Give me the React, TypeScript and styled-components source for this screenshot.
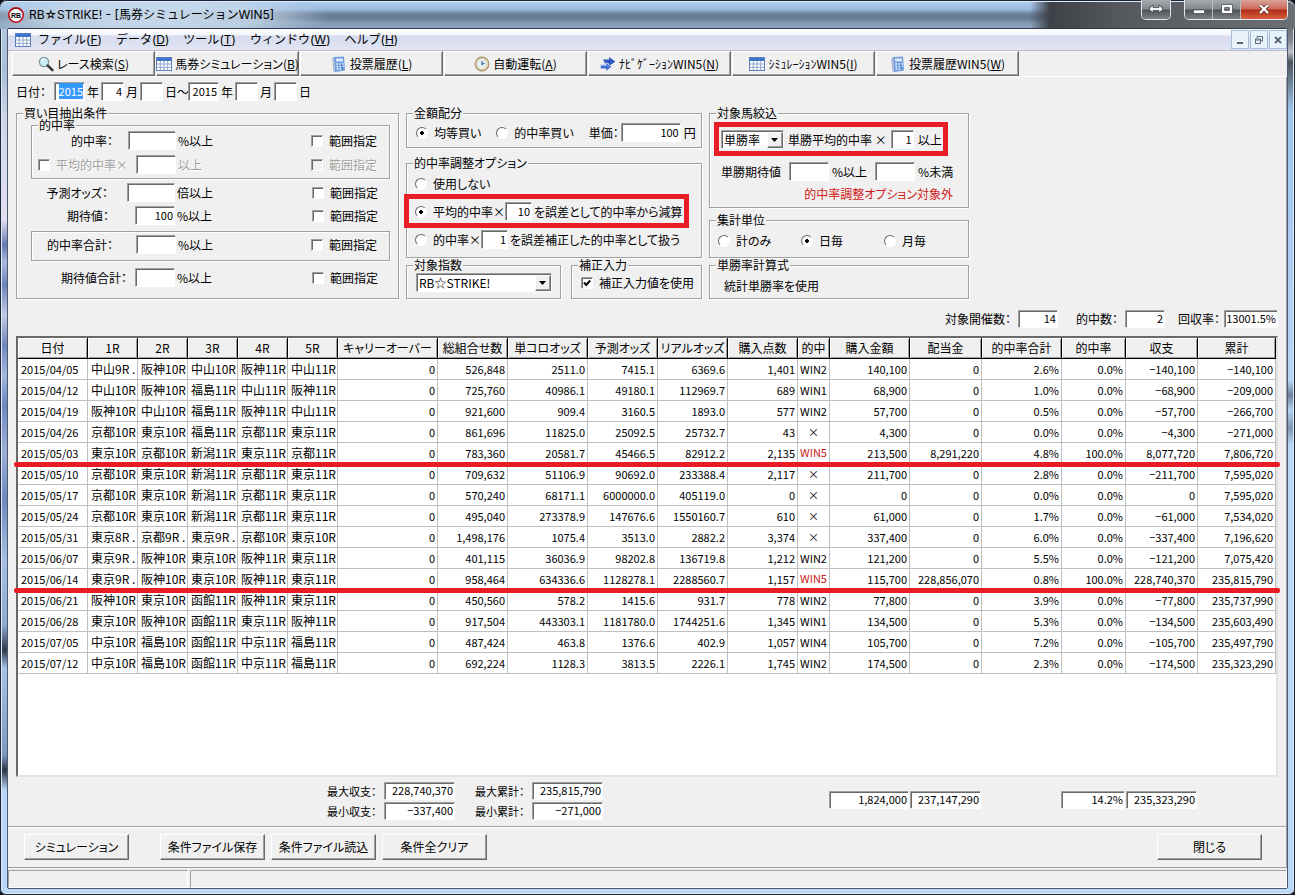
import React from "react";
import styled, { createGlobalStyle, css } from "styled-components";

const face = "#f0f0f0";
const shade = "#a0a0a0";
const dark = "#696969";
const red = "#e81c24";
const gothic = '"Noto Sans CJK JP", "Liberation Sans", sans-serif';
const shell = 'Inter, "Noto Sans CJK JP", sans-serif';

const GlobalStyle = createGlobalStyle`
  * { box-sizing: border-box; }
  body { margin: 0; background: #101018; }
  body, button, input, select {
    font-family: ${gothic};
    font-size: 12px;
    line-height: 16px;
    color: #000;
    font-feature-settings: "palt";
  }
`;

const sunken = css`
  border: 1px solid;
  border-color: ${shade} #fff #fff ${shade};
  box-shadow: inset 1px 1px 0 ${dark};
`;

const raised = css`
  background: ${face};
  border: 1px solid;
  border-color: #fff ${dark} ${dark} #fff;
  box-shadow: inset -1px -1px 0 ${shade};
`;

/* ---------- window frame ---------- */

const Frame = styled.div`
  min-height: 100vh;
  display: flex;
  flex-direction: column;
  padding: 0 8px 7px;
  border-radius: 7px 7px 6px 6px;
  box-shadow: inset 0 0 0 1px #1c2433, inset 0 0 0 2px #dcebfa;
  background:
    linear-gradient(180deg, #b9cde2 0, #a9bfd8 70px, #cfd6ea 120px, #e2dff0 220px, #6579b4 245px, #a9b8df 262px,
      #6d82bd 285px, #c3cbe6 315px, #7286bf 345px, #a3b8de 375px, #6f86bf 405px, #9db0d8 450px, #7088bd 500px,
      #a8bfe2 560px, #8fa9cf 625px, #30384a 650px, #a6c2e6 668px, #7d98c0 755px, #2c3444 770px, #b9d8f8 790px, #b9d8f8) left / 8px 100% no-repeat,
    linear-gradient(180deg, #4a4d52 0, #83878d 40px, #bdc3c9 52px, #4d535a 62px, #9fc4ec 110px, #b6d5f5 380px, #6f8098 395px,
      #b2d2f3 410px, #8093ad 428px, #b9d8f8 445px, #b9d8f8) right / 8px 100% no-repeat,
    #bcd9f8;
`;

const TitleBar = styled.header`
  height: 29px;
  margin: 0 -8px;
  padding: 0 7px 0 8px;
  display: flex;
  align-items: flex-start;
  border-radius: 7px 7px 0 0;
  box-shadow: inset 0 1px 0 #1c2433, inset 0 2px 0 #dcebfa;
  background:
    radial-gradient(ellipse 180px 26px at 150px 17px, rgba(205, 222, 240, 0.95) 0, rgba(200, 218, 236, 0.8) 60%, rgba(200, 218, 236, 0) 100%),
    linear-gradient(90deg, rgba(60, 62, 68, 0) 1030px, #3e4248 1050px, #55585d 1120px, #6c6f74 100%),
    linear-gradient(180deg, #b3cfee 0, #9dbce0 9px, #6a8099 14px, #64788f 18px, #839bb5 23px, #8aa5c4 29px);
`;

const AppIcon = styled.svg`
  width: 16px;
  height: 16px;
  margin-top: 7px;
`;

const Title = styled.h1`
  flex: 1;
  margin: 7px 0 0 5px;
  font-family: ${shell};
  font-size: 12px;
  line-height: 16px;
  font-weight: 400;
  font-feature-settings: normal;
`;

const WindowButtons = styled.div<{ $gap?: number }>`
  display: flex;
  height: 20px;
  margin-left: ${(p) => p.$gap ?? 0}px;
  border: 1px solid #e4e8ee;
  border-top: 0;
  border-radius: 0 0 5px 5px;
  overflow: hidden;
`;

const WindowButton = styled.button<{ $close?: boolean }>`
  width: ${(p) => (p.$close ? 46 : 28)}px;
  padding: 0 0 2px;
  display: flex;
  align-items: center;
  justify-content: center;
  border: 0;
  border-right: ${(p) => (p.$close ? 0 : 1)}px solid #b9bdc3;
  background: ${(p) =>
    p.$close
      ? "linear-gradient(180deg, #dca299 0, #c96a5a 9px, #b02a14 10px, #d8603f 19px)"
      : "linear-gradient(180deg, #a6aaaf 0, #83878d 9px, #4f5358 10px, #7d8187 19px)"};
  &:last-child { border-right: 0; }
`;

const Client = styled.main`
  flex: 1;
  display: flex;
  flex-direction: column;
  background: ${face};
  box-shadow: -1px 0 0 #4c5a70, 1px 0 0 #4c5a70, 0 1px 0 #4c5a70, 0 -1px 0 #2f3b4c;
`;

const MenuBar = styled.nav`
  height: 22px;
  display: flex;
  align-items: center;
  padding: 0 0 0 7px;
  background: linear-gradient(180deg, #fff 0, #f4f6fb 6px, #d6dcee 7px, #e0e4f4 20px);
  border-bottom: 1px solid #b8bccc;
`;

const MenuItem = styled.button`
  margin: 0 0 0 3px;
  padding: 0 4px;
  border: 0;
  background: none;
  font-family: ${shell};
  font-feature-settings: normal;
  & + & { margin-left: 6px; }
`;

const MdiButtons = styled.div`
  margin-left: auto;
  display: flex;
  gap: 1px;
`;

const MdiButton = styled.button`
  width: 18px;
  height: 19px;
  padding: 0;
  display: flex;
  align-items: center;
  justify-content: center;
  border: 1px solid #a9bdd6;
  background: #e8f2fb;
`;

const ToolBar = styled.div`
  display: flex;
  gap: 1px;
  padding-left: 4px;
  height: 26px;
  border-bottom: 1px solid #fff;
`;

const ToolButton = styled.button`
  ${raised}
  flex: 0 0 143px;
  min-width: 0;
  display: flex;
  align-items: center;
  justify-content: center;
  gap: 3px;
  padding: 0;
  white-space: nowrap;
  svg { flex: none; }
`;

/* ---------- form ---------- */

const Form = styled.form`
  flex: 1;
  display: flex;
  flex-direction: column;
  padding: 0 8px;
  border-right: 1px solid ${shade};
`;

const DateRow = styled.div`
  display: flex;
  align-items: center;
  gap: 2px;
  padding: 5px 0 6px;
`;

const DateLabel = styled.span<{ $width?: number }>`
  width: ${(p) => p.$width ?? 12}px;
  white-space: nowrap;
`;

const Field = styled.input<{ $width: number; $small?: boolean }>`
  ${sunken}
  flex: none;
  width: ${(p) => p.$width}px;
  height: ${(p) => (p.$small ? 18 : 19)}px;
  padding: 0 1px 2px 1px;
  background: #fff;
  font-size: 11px;
  text-align: right;
  outline: 0;
  border-radius: 0;
  &::selection { background: #3399ff; color: #fff; }
`;

const Panels = styled.div`
  display: grid;
  grid-template-columns: 383px 296px 260px;
  column-gap: 7px;
`;

const Column = styled.div`
  display: flex;
  flex-direction: column;
`;

const Legend = styled.legend`
  padding: 0 1px;
  line-height: 12px;
  background: ${face};
`;

const Group = styled.fieldset<{ $pad: string; $inset: number; $top?: number }>`
  min-width: 0;
  margin: ${(p) => p.$top ?? 0}px 0 0;
  padding: ${(p) => p.$pad};
  padding-left: ${(p) => p.$inset}px;
  border: 1px solid ${shade};
  box-shadow: 1px 1px 0 #fff, inset 1px 1px 0 #fff;
  & > ${Legend} { margin-left: ${(p) => 6 - p.$inset}px; }
`;

const Box = styled.div`
  margin: 6px 0 7px;
  padding: 3px 0 6px;
  border: 1px solid ${shade};
  box-shadow: 1px 1px 0 #fff, inset 1px 1px 0 #fff;
`;

const RuleRow = styled.div<{ $top?: number; $disabled?: boolean }>`
  display: grid;
  grid-template-columns: 144px 1fr 78px;
  align-items: center;
  height: 19px;
  margin-top: ${(p) => p.$top ?? 0}px;
  white-space: nowrap;
  color: ${(p) => (p.$disabled ? shade : "#000")};
  text-shadow: ${(p) => (p.$disabled ? "1px 1px 0 #fff" : "none")};
`;

const Lead = styled.div<{ $gap: number }>`
  display: flex;
  align-items: center;
  justify-content: flex-end;
  gap: ${(p) => p.$gap}px;
`;

const Suffix = styled.span`
  padding-left: 2px;
`;

const OptionLabel = styled.label`
  display: flex;
  align-items: center;
  gap: 6px;
  white-space: nowrap;
`;

const Check = styled.input`
  ${sunken}
  appearance: none;
  flex: none;
  width: 12px;
  height: 12px;
  margin: 0;
  background: #fff;
  &:disabled { background: ${face}; }
  &:checked {
    background: #fff url("data:image/svg+xml,%3Csvg xmlns='http://www.w3.org/2000/svg' viewBox='0 0 10 10'%3E%3Cpath d='M2 4.5L4.2 7L8.2 2.5' fill='none' stroke='black' stroke-width='1.9'/%3E%3C/svg%3E") center / 10px 10px;
  }
`;

const Radio = styled.input`
  appearance: none;
  flex: none;
  width: 12px;
  height: 12px;
  margin: 0;
  border: 1px solid;
  border-color: ${dark} #fff #fff ${dark};
  border-radius: 50%;
  background: #fff;
  &:checked { background: radial-gradient(circle, #000 0, #000 2px, #fff 2px); }
`;

const Line = styled.div<{ $top?: number }>`
  position: relative;
  display: flex;
  align-items: center;
  height: 19px;
  margin-top: ${(p) => p.$top ?? 0}px;
  white-space: nowrap;
`;

const Gap = styled.span<{ $width: number }>`
  flex: none;
  width: ${(p) => p.$width}px;
`;

/* red frame drawn over an important setting */
const Highlight = styled.span<{ $left: number; $width: number }>`
  position: absolute;
  top: -8px;
  bottom: -7px;
  left: ${(p) => p.$left}px;
  width: ${(p) => p.$width}px;
  border: 5px solid ${red};
  pointer-events: none;
`;

const Spread = styled.div`
  display: grid;
  grid-template-columns: 83px 83px 1fr;
  align-items: center;
  height: 19px;
`;

const Split = styled.div`
  display: grid;
  grid-template-columns: 155px 131px;
  justify-content: space-between;
  margin-top: 1px;
`;

const SelectWrap = styled.span<{ $width: number }>`
  position: relative;
  display: block;
  flex: none;
  width: ${(p) => p.$width}px;
  height: 19px;
`;

const Select = styled.select`
  ${sunken}
  appearance: none;
  width: 100%;
  height: 19px;
  padding: 0 0 0 2px;
  background: #fff;
  border-radius: 0;
  outline: 0;
`;

const Arrow = styled.span`
  ${raised}
  position: absolute;
  top: 2px;
  right: 1px;
  width: 16px;
  height: 16px;
  display: flex;
  align-items: center;
  justify-content: center;
  pointer-events: none;
`;

const Note = styled.p`
  margin: 6px 15px 0 0;
  line-height: 13px;
  text-align: right;
  color: #d01818;
`;

const Plain = styled.p`
  margin: 0;
  line-height: 19px;
`;

const Stats = styled.div`
  display: flex;
  align-items: center;
  justify-content: flex-end;
  padding: 11px 0 8px;
`;

/* ---------- result grid ---------- */

const GridBox = styled.div`
  flex: 1;
  border: 2px solid;
  border-color: ${dark} #e3e3e3 #e3e3e3 ${dark};
  background: #fff;
`;

const Table = styled.table`
  width: 100%;
  table-layout: fixed;
  border-collapse: separate;
  border-spacing: 0;
`;

const Col = styled.col<{ $width: number }>`
  width: ${(p) => p.$width}px;
`;

const Th = styled.th`
  height: 21px;
  padding: 0;
  font-weight: 400;
  line-height: 18px;
  white-space: nowrap;
  overflow: hidden;
  background: ${face};
  border-right: 1px solid #000;
  border-bottom: 1px solid #000;
  box-shadow: inset 1px 1px 0 #fff, inset -1px -1px 0 ${shade};
`;

const Td = styled.td<{ $align?: "left" | "center"; $win?: boolean; $race?: boolean }>`
  height: 21px;
  padding: ${(p) => (p.$win ? "0 0 3px" : p.$align === "center" ? "0" : "0 2px 0 3px")};
  border-right: 1px solid #c0c0c0;
  border-bottom: 1px solid #c0c0c0;
  font-size: ${(p) => (p.$race ? 12 : 11)}px;
  line-height: 16px;
  text-align: ${(p) => p.$align ?? "right"};
  white-space: nowrap;
  overflow: ${(p) => (p.$race ? "hidden" : "visible")};
  color: ${(p) => (p.$win ? "#d01818" : "#000")};
`;

const Tr = styled.tr<{ $marked?: boolean }>`
  position: relative;
  ${(p) =>
    p.$marked &&
    css`
      z-index: 1;
      td:first-child::after {
        content: "";
        position: absolute;
        left: -4px;
        right: -4px;
        bottom: -3px;
        height: 5px;
        border-radius: 2px;
        background: ${red};
        z-index: 1;
      }
    `}
`;

/* ---------- footer ---------- */

const Summary = styled.div`
  display: flex;
  justify-content: space-between;
  padding: 5px 81px 6px 311px;
  font-size: 11px;
`;

const Extremes = styled.div`
  display: grid;
  grid-template-columns: 57px 71px 77px 71px;
  row-gap: 2px;
  align-items: center;
  label { white-space: nowrap; }
  label:nth-of-type(even) { padding-left: 20px; }
`;

const Totals = styled.div`
  display: flex;
  gap: 1px;
  padding-top: 9px;
`;

const Actions = styled.div`
  display: flex;
  gap: 6px;
  margin: 0 -8px;
  padding: 7px 24px 7px 16px;
  border-top: 1px solid ${shade};
  border-bottom: 1px solid ${shade};
  box-shadow: inset 0 1px 0 #fff;
`;

const Action = styled.button<{ $start?: boolean; $end?: boolean }>`
  ${raised}
  width: 105px;
  height: 26px;
  padding: 0;
  margin-left: ${(p) => (p.$end ? "auto" : p.$start ? "25px" : "0")};
`;

const StatusBar = styled.footer`
  display: grid;
  grid-template-columns: 180px 1fr;
  gap: 2px;
  padding-top: 2px;
  height: 20px;
`;

const StatusPane = styled.div`
  border: 1px solid;
  border-color: ${shade} #fff #fff ${shade};
`;

/* ---------- icons ---------- */

const SheetIcon = () => (
  <svg width="16" height="16" viewBox="0 0 16 16">
    <rect x="0.5" y="1.5" width="15" height="13" fill="#fff" stroke="#5a7fb8" />
    <rect x="1" y="2" width="14" height="3" fill="#3f74cc" />
    <path d="M1 8H15M1 11.3H15M4.3 5V14M8 5V14M11.7 5V14" stroke="#8fa8cc" strokeWidth="1" />
  </svg>
);

const SearchIcon = () => (
  <svg width="16" height="16" viewBox="0 0 16 16">
    <circle cx="6" cy="6" r="4.6" fill="#c9ecf6" stroke="#7c97a5" strokeWidth="1.4" />
    <path d="M3.6 5.4a2.6 2.6 0 0 1 2.6-2.2" stroke="#fff" strokeWidth="1.3" fill="none" />
    <path d="M9.8 9.6L14.4 14.2" stroke="#39332f" strokeWidth="2.6" strokeLinecap="round" />
  </svg>
);

const BookIcon = () => (
  <svg width="16" height="16" viewBox="0 0 16 16">
    <path d="M3 1L13 0.5L14 14.5L4 16Z" fill="#6f9de0" />
    <path d="M3 1L4 16L2.2 15L1.4 2Z" fill="#a9b8d0" />
    <rect x="5" y="2.5" width="7" height="3" fill="#d9e8fa" />
    <path d="M9 6L13 11L11 14Z" fill="#2f62bc" opacity="0.7" />
    <path d="M5.3 8H7M8.3 8H10M11.2 8H12.6M5.5 10.5H7.2M8.5 10.5H10.2M11.4 10.5H12.8M5.7 13H7.4M8.7 13H10.4" stroke="#eaf3ff" strokeWidth="1.3" />
  </svg>
);

const ClockIcon = () => (
  <svg width="16" height="16" viewBox="0 0 16 16">
    <circle cx="8" cy="8" r="6.8" fill="#d9e8f4" stroke="#a58f64" strokeWidth="1.2" />
    <circle cx="8" cy="8" r="5.4" fill="#e6f1fa" stroke="#e0cf9f" strokeWidth="1.4" />
    <path d="M8 5V8.4L10.6 7" stroke="#4f6f94" strokeWidth="1.2" fill="none" />
  </svg>
);

const ArrowsIcon = () => (
  <svg width="16" height="16" viewBox="0 0 16 16">
    <path d="M3 3.6H9V1L15.4 5.5L9 10V7.4H5Z" fill="#2f55c0" />
    <path d="M0.5 8.8H6V6.5L11.6 10.8L6 15.2V12.8H0.5Z" fill="#3c66d2" stroke="#f0f0f0" strokeWidth="0.6" />
    <path d="M1 9.6H6.6L9 10.8" stroke="#8fb0f0" strokeWidth="0.9" fill="none" />
  </svg>
);

const DownIcon = () => (
  <svg width="8" height="5" viewBox="0 0 8 5">
    <path d="M0 0H7L3.5 4Z" fill="#000" />
  </svg>
);

/* ---------- data ---------- */

const columns: [string, number][] = [
  ["日付", 70], ["1R", 50], ["2R", 50], ["3R", 50], ["4R", 50], ["5R", 50],
  ["キャリーオーバー", 100], ["総組合せ数", 70], ["単コロオッズ", 80], ["予測オッズ", 70],
  ["リアルオッズ", 70], ["購入点数", 70], ["的中", 32], ["購入金額", 80], ["配当金", 72],
  ["的中率合計", 80], ["的中率", 64], ["収支", 72], ["累計", 78],
];

const rows: string[] = [
  "2015/04/05|中山9R .|阪神10R|中山10R|阪神11R|中山11R|0|526,848|2511.0|7415.1|6369.6|1,401|WIN2|140,100|0|2.6%|0.0%|−140,100|−140,100",
  "2015/04/12|中山10R|阪神10R|福島11R|中山11R|阪神11R|0|725,760|40986.1|49180.1|112969.7|689|WIN1|68,900|0|1.0%|0.0%|−68,900|−209,000",
  "2015/04/19|阪神10R|中山10R|福島11R|阪神11R|中山11R|0|921,600|909.4|3160.5|1893.0|577|WIN2|57,700|0|0.5%|0.0%|−57,700|−266,700",
  "2015/04/26|京都10R|東京10R|福島11R|京都11R|東京11R|0|861,696|11825.0|25092.5|25732.7|43|×|4,300|0|0.0%|0.0%|−4,300|−271,000",
  "2015/05/03|東京10R|京都10R|新潟11R|東京11R|京都11R|0|783,360|20581.7|45466.5|82912.2|2,135|WIN5|213,500|8,291,220|4.8%|100.0%|8,077,720|7,806,720",
  "2015/05/10|京都10R|東京10R|新潟11R|京都11R|東京11R|0|709,632|51106.9|90692.0|233388.4|2,117|×|211,700|0|2.8%|0.0%|−211,700|7,595,020",
  "2015/05/17|京都10R|東京10R|新潟11R|京都11R|東京11R|0|570,240|68171.1|6000000.0|405119.0|0|×|0|0|0.0%|0.0%|0|7,595,020",
  "2015/05/24|京都10R|東京10R|新潟11R|京都11R|東京11R|0|495,040|273378.9|147676.6|1550160.7|610|×|61,000|0|1.7%|0.0%|−61,000|7,534,020",
  "2015/05/31|東京8R .|京都9R .|東京9R .|京都10R|東京10R|0|1,498,176|1075.4|3513.0|2882.2|3,374|×|337,400|0|6.0%|0.0%|−337,400|7,196,620",
  "2015/06/07|東京9R .|阪神10R|東京10R|阪神11R|東京11R|0|401,115|36036.9|98202.8|136719.8|1,212|WIN2|121,200|0|5.5%|0.0%|−121,200|7,075,420",
  "2015/06/14|東京9R .|阪神10R|東京10R|阪神11R|東京11R|0|958,464|634336.6|1128278.1|2288560.7|1,157|WIN5|115,700|228,856,070|0.8%|100.0%|228,740,370|235,815,790",
  "2015/06/21|阪神10R|東京10R|函館11R|阪神11R|東京11R|0|450,560|578.2|1415.6|931.7|778|WIN2|77,800|0|3.9%|0.0%|−77,800|235,737,990",
  "2015/06/28|東京10R|阪神10R|函館11R|東京11R|阪神11R|0|917,504|443303.1|1181780.0|1744251.6|1,345|WIN1|134,500|0|5.3%|0.0%|−134,500|235,603,490",
  "2015/07/05|中京10R|福島10R|函館11R|中京11R|福島11R|0|487,424|463.8|1376.6|402.9|1,057|WIN4|105,700|0|7.2%|0.0%|−105,700|235,497,790",
  "2015/07/12|中京10R|福島10R|函館11R|中京11R|福島11R|0|692,224|1128.3|3813.5|2226.1|1,745|WIN2|174,500|0|2.3%|0.0%|−174,500|235,323,290",
];

const menus = [["ファイル", "F"], ["データ", "D"], ["ツール", "T"], ["ウィンドウ", "W"], ["ヘルプ", "H"]];

const tools: [React.FC, string, string][] = [
  [SearchIcon, "レース検索", "S"],
  [SheetIcon, "馬券シミュレーション", "B"],
  [BookIcon, "投票履歴", "L"],
  [ClockIcon, "自動運転", "A"],
  [ArrowsIcon, "ﾅﾋﾞｹﾞｰｼｮﾝWIN5", "N"],
  [SheetIcon, "ｼﾐｭﾚｰｼｮﾝWIN5", "I"],
  [BookIcon, "投票履歴WIN5", "W"],
];

const Accel = ({ text, letter }: { text: string; letter: string }) => (
  <span>
    {text}(<u>{letter}</u>)
  </span>
);

type RuleProps = {
  id: string;
  label: string;
  suffix: string;
  gap: number;
  width?: number;
  value?: string;
  top?: number;
};

const Rule = ({ id, label, suffix, gap, width = 40, value = "", top }: RuleProps) => (
  <RuleRow $top={top}>
    <Lead $gap={gap}>
      <label htmlFor={id}>{label}</label>
      <Field id={id} $width={width} defaultValue={value} />
    </Lead>
    <Suffix>{suffix}</Suffix>
    <OptionLabel>
      <Check type="checkbox" />
      範囲指定
    </OptionLabel>
  </RuleRow>
);

const Dropdown = ({ label, value, width }: { label: string; value: string; width: number }) => (
  <SelectWrap $width={width}>
    <Select aria-label={label} defaultValue={value}>
      <option>{value}</option>
    </Select>
    <Arrow>
      <DownIcon />
    </Arrow>
  </SelectWrap>
);

export default function App() {
  const startYear = React.useRef<HTMLInputElement>(null);
  React.useEffect(() => {
    startYear.current?.focus();
    startYear.current?.select();
  }, []);

  return (
    <>
      <GlobalStyle />
      <Frame>
        <TitleBar>
          <AppIcon viewBox="0 0 16 16">
            <circle cx="8" cy="8" r="7.2" fill="#fff" stroke="#c0141c" strokeWidth="1.6" />
            <path d="M2.4 4.5a6.6 6.6 0 0 1 11.2 0" fill="none" stroke="#7a0c10" strokeWidth="1" />
            <text x="8" y="10.6" fontSize="7" fontWeight="700" textAnchor="middle" fontFamily="Liberation Sans">RB</text>
          </AppIcon>
          <Title>RB☆STRIKE! - [馬券シミュレーションWIN5]</Title>
          <WindowButtons>
            <WindowButton type="button" aria-label="切替">
              <svg width="16" height="10" viewBox="0 0 16 10">
                <path d="M1 5L5 1V3.6H11V1L15 5L11 9V6.4H5V9Z" fill="#fff" stroke="#3a3d42" strokeWidth="0.8" />
              </svg>
            </WindowButton>
          </WindowButtons>
          <WindowButtons $gap={13}>
            <WindowButton type="button" aria-label="最小化">
              <svg width="12" height="10" viewBox="0 0 12 10">
                <rect x="0.5" y="6" width="11" height="3.4" fill="#fff" stroke="#3a3d42" strokeWidth="0.6" />
              </svg>
            </WindowButton>
            <WindowButton type="button" aria-label="元に戻す">
              <svg width="12" height="10" viewBox="0 0 12 10">
                <path d="M0.5 0.5H11.5V9.5H0.5ZM3.6 3.4V6.4H8.4V3.4Z" fill="#fff" fillRule="evenodd" stroke="#3a3d42" strokeWidth="0.7" />
              </svg>
            </WindowButton>
            <WindowButton type="button" aria-label="終了" $close>
              <svg width="12" height="10" viewBox="0 0 12 10">
                <path d="M2 1L10 9M10 1L2 9" stroke="#4a2320" strokeWidth="3.6" />
                <path d="M2 1L10 9M10 1L2 9" stroke="#fff" strokeWidth="2.4" />
              </svg>
            </WindowButton>
          </WindowButtons>
        </TitleBar>

        <Client>
          <MenuBar>
            <SheetIcon />
            {menus.map(([text, letter]) => (
              <MenuItem key={letter} type="button">
                <Accel text={text} letter={letter} />
              </MenuItem>
            ))}
            <MdiButtons>
              <MdiButton type="button" aria-label="子ウィンドウ最小化">
                <svg width="10" height="10"><rect x="2" y="7" width="6" height="2" fill="#5c6b7c" /></svg>
              </MdiButton>
              <MdiButton type="button" aria-label="子ウィンドウを戻す">
                <svg width="10" height="10"><path d="M3 3V1.5H8.5V6H7M1.5 4H6.5V8.5H1.5ZM1.5 5H6.5" fill="none" stroke="#5c6b7c" /></svg>
              </MdiButton>
              <MdiButton type="button" aria-label="子ウィンドウを閉じる">
                <svg width="10" height="10"><path d="M2 2L8 8M8 2L2 8" stroke="#5c6b7c" strokeWidth="2" /></svg>
              </MdiButton>
            </MdiButtons>
          </MenuBar>
          <ToolBar>
            {tools.map(([Icon, text, letter]) => (
              <ToolButton key={letter} type="button">
                <Icon />
                <Accel text={text} letter={letter} />
              </ToolButton>
            ))}
          </ToolBar>

          <Form onSubmit={(e) => e.preventDefault()}>
            <DateRow>
              <DateLabel $width={36}>日付：</DateLabel>
              <Field ref={startYear} aria-label="開始年" $width={31} defaultValue="2015" />
              <DateLabel>年</DateLabel>
              <Field aria-label="開始月" $width={23} defaultValue="4" />
              <DateLabel>月</DateLabel>
              <Field aria-label="開始日" $width={23} />
              <DateLabel $width={21}>日～</DateLabel>
              <Field aria-label="終了年" $width={31} defaultValue="2015" />
              <DateLabel>年</DateLabel>
              <Field aria-label="終了月" $width={23} />
              <DateLabel>月</DateLabel>
              <Field aria-label="終了日" $width={23} />
              <DateLabel>日</DateLabel>
            </DateRow>

            <Panels>
              <Group $pad="0 8px 11px" $inset={14}>
                <Legend>買い目抽出条件</Legend>
                <Group $pad="0 0 4px" $inset={0}>
                  <Legend>的中率</Legend>
                  <Rule id="hit" label="的中率：" suffix="%以上" gap={15} width={48} />
                  <RuleRow $top={5} $disabled>
                    <Lead $gap={8}>
                      <OptionLabel>
                        <Check type="checkbox" />
                        平均的中率×
                      </OptionLabel>
                      <Field aria-label="平均的中率の倍率" $width={40} />
                    </Lead>
                    <Suffix>以上</Suffix>
                    <OptionLabel>
                      <Check type="checkbox" disabled />
                      範囲指定
                    </OptionLabel>
                  </RuleRow>
                </Group>
                <Rule id="odds" label="予測オッズ：" suffix="倍以上" gap={19} width={48} top={4} />
                <Rule id="expect" label="期待値：" suffix="%以上" gap={26} value="100" top={4} />
                <Box>
                  <Rule id="hitsum" label="的中率合計：" suffix="%以上" gap={23} />
                </Box>
                <Rule id="expectsum" label="期待値合計：" suffix="%以上" gap={8} />
              </Group>

              <Column>
                <Group $pad="4px 4px 5px" $inset={9}>
                  <Legend>金額配分</Legend>
                  <Line>
                    <OptionLabel>
                      <Radio type="radio" name="stake" defaultChecked />
                      均等買い
                    </OptionLabel>
                    <Gap $width={15} />
                    <OptionLabel>
                      <Radio type="radio" name="stake" />
                      的中率買い
                    </OptionLabel>
                    <Gap $width={15} />
                    <label htmlFor="unit">単価：</label>
                    <Gap $width={2} />
                    <Field id="unit" $width={60} defaultValue="100" />
                    <Gap $width={3} />
                    円
                  </Line>
                </Group>
                <Group $pad="5px 4px 8px" $inset={8} $top={9}>
                  <Legend>的中率調整オプション</Legend>
                  <Line>
                    <OptionLabel>
                      <Radio type="radio" name="adjust" />
                      使用しない
                    </OptionLabel>
                  </Line>
                  <Line $top={9}>
                    <OptionLabel>
                      <Radio type="radio" name="adjust" defaultChecked />
                      平均的中率×
                    </OptionLabel>
                    <Field aria-label="誤差の倍率" $width={27} defaultValue="10" />
                    <Gap $width={2} />
                    を誤差として的中率から減算
                    <Highlight $left={-11} $width={285} />
                  </Line>
                  <Line $top={9}>
                    <OptionLabel>
                      <Radio type="radio" name="adjust" />
                      的中率×
                    </OptionLabel>
                    <Field aria-label="誤差補正の倍率" $width={27} defaultValue="1" />
                    <Gap $width={2} />
                    を誤差補正した的中率として扱う
                  </Line>
                </Group>
                <Split>
                  <Group $pad="2px 0 6px" $inset={9}>
                    <Legend>対象指数</Legend>
                    <Dropdown label="対象指数" value="RB☆STRIKE!" width={136} />
                  </Group>
                  <Group $pad="2px 0 6px" $inset={9}>
                    <Legend>補正入力</Legend>
                    <Line>
                      <OptionLabel>
                        <Check type="checkbox" defaultChecked />
                        補正入力値を使用
                      </OptionLabel>
                    </Line>
                  </Group>
                </Split>
              </Column>

              <Column>
                <Group $pad="11px 0 7px" $inset={11}>
                  <Legend>対象馬絞込</Legend>
                  <Line>
                    <Dropdown label="対象馬の率" value="単勝率" width={63} />
                    <Gap $width={4} />
                    単勝平均的中率&nbsp;×
                    <Gap $width={4} />
                    <Field aria-label="単勝平均的中率の倍率" $width={23} defaultValue="1" />
                    <Gap $width={4} />
                    以上
                    <Highlight $left={-7} $width={234} />
                  </Line>
                  <Line $top={13}>
                    単勝期待値
                    <Gap $width={8} />
                    <Field aria-label="単勝期待値の下限" $width={40} />
                    <Gap $width={3} />
                    %以上
                    <Gap $width={8} />
                    <Field aria-label="単勝期待値の上限" $width={40} />
                    <Gap $width={3} />
                    %未満
                  </Line>
                  <Note>的中率調整オプション対象外</Note>
                </Group>
                <Group $pad="5px 0 7px" $inset={8} $top={6}>
                  <Legend>集計単位</Legend>
                  <Spread>
                    <OptionLabel>
                      <Radio type="radio" name="period" />
                      計のみ
                    </OptionLabel>
                    <OptionLabel>
                      <Radio type="radio" name="period" defaultChecked />
                      日毎
                    </OptionLabel>
                    <OptionLabel>
                      <Radio type="radio" name="period" />
                      月毎
                    </OptionLabel>
                  </Spread>
                </Group>
                <Group $pad="5px 0 3px" $inset={14} $top={1}>
                  <Legend>単勝率計算式</Legend>
                  <Plain>統計単勝率を使用</Plain>
                </Group>
              </Column>
            </Panels>

            <Stats>
              <label htmlFor="meets">対象開催数：</label>
              <Gap $width={7} />
              <Field id="meets" $small $width={40} defaultValue="14" />
              <Gap $width={18} />
              <label htmlFor="hits">的中数：</label>
              <Gap $width={7} />
              <Field id="hits" $small $width={40} defaultValue="2" />
              <Gap $width={13} />
              <label htmlFor="return">回収率：</label>
              <Gap $width={4} />
              <Field id="return" $small $width={54} defaultValue="13001.5%" />
            </Stats>

            <GridBox>
              <Table>
                <colgroup>
                  {columns.map(([name, width], i) => (
                    <Col key={name + i} $width={width} />
                  ))}
                </colgroup>
                <thead>
                  <tr>
                    {columns.map(([name], i) => (
                      <Th key={name + i}>{name}</Th>
                    ))}
                  </tr>
                </thead>
                <tbody>
                  {rows.map((row) => {
                    const cells = row.split("|");
                    const win = cells[12] === "WIN5";
                    return (
                      <Tr key={cells[0]} $marked={win}>
                        {cells.map((cell, i) => (
                          <Td
                            key={i}
                            $align={i < 6 ? "left" : i === 12 ? "center" : undefined}
                            $race={i > 0 && i < 6}
                            $win={i === 12 && win}
                          >
                            {cell}
                          </Td>
                        ))}
                      </Tr>
                    );
                  })}
                </tbody>
              </Table>
            </GridBox>

            <Summary>
              <Extremes>
                <label htmlFor="maxbal">最大収支：</label>
                <Field id="maxbal" $small $width={71} defaultValue="228,740,370" />
                <label htmlFor="maxtot">最大累計：</label>
                <Field id="maxtot" $small $width={71} defaultValue="235,815,790" />
                <label htmlFor="minbal">最小収支：</label>
                <Field id="minbal" $small $width={71} defaultValue="−337,400" />
                <label htmlFor="mintot">最小累計：</label>
                <Field id="mintot" $small $width={71} defaultValue="−271,000" />
              </Extremes>
              <Totals>
                <Field aria-label="購入金額計" $small $width={80} defaultValue="1,824,000" />
                <Field aria-label="配当金計" $small $width={71} defaultValue="237,147,290" />
                <Gap $width={78} />
                <Field aria-label="的中率" $small $width={64} defaultValue="14.2%" />
                <Field aria-label="収支計" $small $width={71} defaultValue="235,323,290" />
              </Totals>
            </Summary>

            <Actions>
              <Action type="button">シミュレーション</Action>
              <Action type="button" $start>条件ファイル保存</Action>
              <Action type="button">条件ファイル読込</Action>
              <Action type="button">条件全クリア</Action>
              <Action type="button" $end>閉じる</Action>
            </Actions>
          </Form>
          <StatusBar>
            <StatusPane />
            <StatusPane />
          </StatusBar>
        </Client>
      </Frame>
    </>
  );
}
